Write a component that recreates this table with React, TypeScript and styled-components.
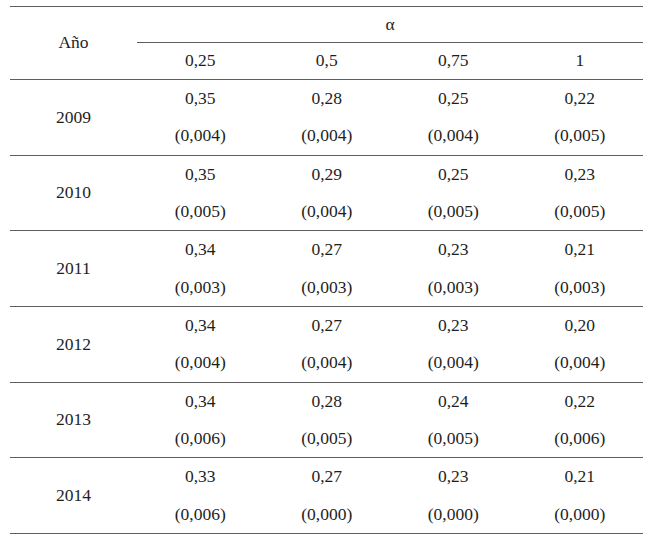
import { createGlobalStyle, styled } from "styled-components";

const GlobalStyle = createGlobalStyle`
  html, body {
    margin: 0;
    padding: 0;
    background: #ffffff;
  }
  body {
    font-family: "Liberation Serif", "Times New Roman", serif;
    color: #1e1e1e;
  }
`;

const Page = styled.div`
  padding: 6px 7px 0 10px;
`;

const Table = styled.table`
  width: 633px;
  border-collapse: collapse;
  font-size: 17.5px;
  line-height: 1;
  border-top: 1px solid #5e5e5e;
  border-bottom: 1px solid #5e5e5e;
`;

const HeadCell = styled.th<{ $h?: number; $rule?: boolean }>`
  font-weight: normal;
  text-align: center;
  padding: 0;
  height: ${(p) => p.$h ?? 36}px;
  border-bottom: ${(p) => (p.$rule ? "1px solid #5e5e5e" : "none")};
`;

const YearCell = styled.td`
  width: 127px;
  text-align: center;
  padding: 0;
  border-bottom: 1px solid #5e5e5e;
`;

const ValueCell = styled.td<{ $last?: boolean }>`
  text-align: center;
  padding: 0;
  width: 126.5px;
  height: ${(p) => (p.$last ? 37.2 : 37.5)}px;
  border-bottom: ${(p) => (p.$last ? "1px solid #5e5e5e" : "none")};
`;

const alphas = ["0,25", "0,5", "0,75", "1"];

const rows = [
  { year: "2009", est: ["0,35", "0,28", "0,25", "0,22"], se: ["(0,004)", "(0,004)", "(0,004)", "(0,005)"] },
  { year: "2010", est: ["0,35", "0,29", "0,25", "0,23"], se: ["(0,005)", "(0,004)", "(0,005)", "(0,005)"] },
  { year: "2011", est: ["0,34", "0,27", "0,23", "0,21"], se: ["(0,003)", "(0,003)", "(0,003)", "(0,003)"] },
  { year: "2012", est: ["0,34", "0,27", "0,23", "0,20"], se: ["(0,004)", "(0,004)", "(0,004)", "(0,004)"] },
  { year: "2013", est: ["0,34", "0,28", "0,24", "0,22"], se: ["(0,006)", "(0,005)", "(0,005)", "(0,006)"] },
  { year: "2014", est: ["0,33", "0,27", "0,23", "0,21"], se: ["(0,006)", "(0,000)", "(0,000)", "(0,000)"] },
];

const App = () => (
  <Page>
    <GlobalStyle />
    <Table>
      <thead>
        <tr>
          <HeadCell rowSpan={2} $rule style={{ width: 127 }}>
            Año
          </HeadCell>
          <HeadCell colSpan={4} $h={35} $rule>
            α
          </HeadCell>
        </tr>
        <tr>
          {alphas.map((a) => (
            <HeadCell key={a} $h={36} $rule>
              {a}
            </HeadCell>
          ))}
        </tr>
      </thead>
      <tbody>
        {rows.map((r) => [
          <tr key={`${r.year}-est`}>
            <YearCell rowSpan={2}>{r.year}</YearCell>
            {r.est.map((v, i) => (
              <ValueCell key={`e-${i}`}>{v}</ValueCell>
            ))}
          </tr>,
          <tr key={`${r.year}-se`}>
            {r.se.map((v, i) => (
              <ValueCell key={`s-${i}`} $last>
                {v}
              </ValueCell>
            ))}
          </tr>,
        ])}
      </tbody>
    </Table>
  </Page>
);

export default App;
